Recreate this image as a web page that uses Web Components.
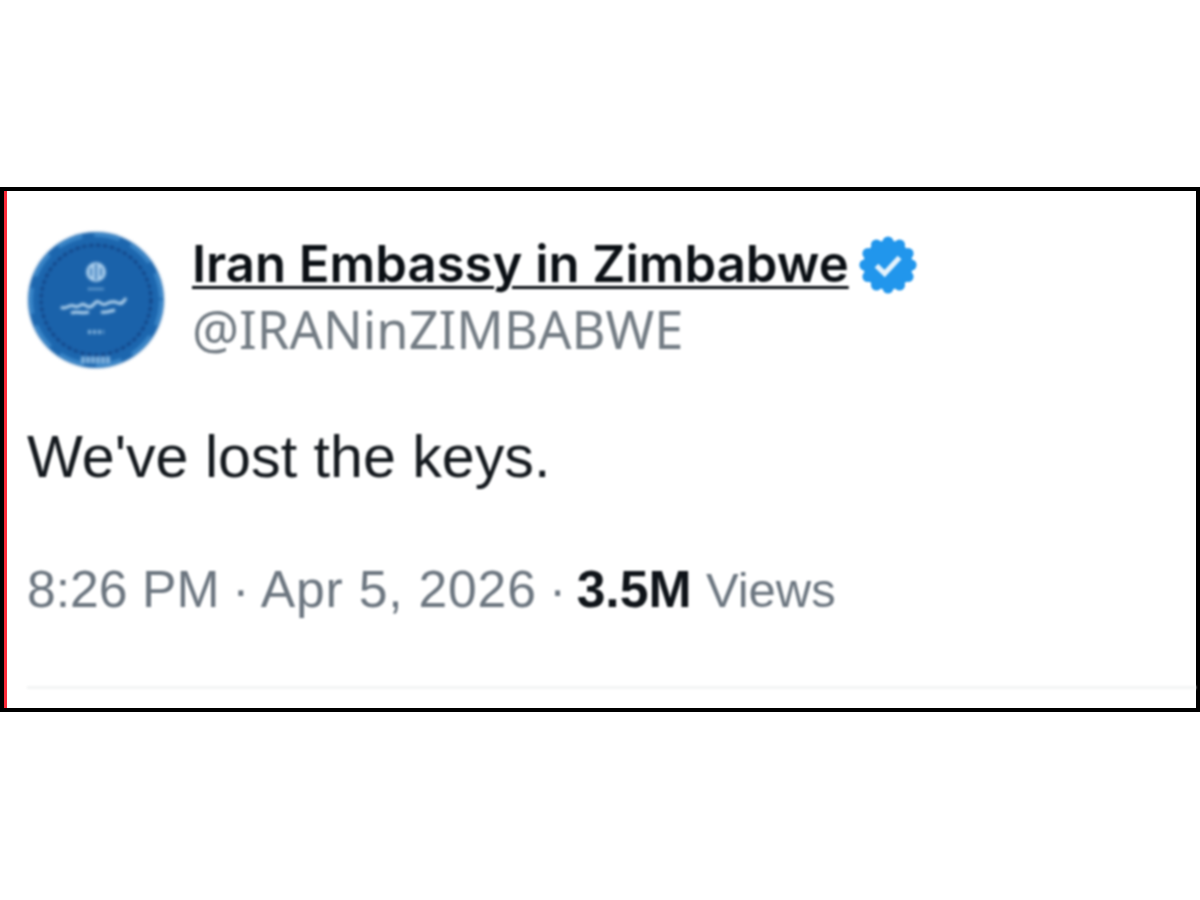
<!DOCTYPE html>
<html>
<head>
<meta charset="utf-8">
<style>
  html, body { margin: 0; background: #fff; }
  body { padding-top: 187px; height: 713px; overflow: hidden; }
</style>
</head>
<body>
<tweet-shot>
  <tweet-head name="Iran Embassy in Zimbabwe" handle="@IRANinZIMBABWE"></tweet-head>
  <p>We've lost the keys.</p>
  <tweet-meta time="8:26 PM" date="Apr 5, 2026" views="3.5M"></tweet-meta>
</tweet-shot>

<script>
class TweetShot extends HTMLElement {
  constructor() {
    super();
    this.attachShadow({ mode: 'open' });
    this.shadowRoot.innerHTML = `
      <style>
        :host {
          display: block;
          box-sizing: border-box;
          height: 525px;
          border: 4px solid #000;
          background: #fff;
        }
        .inner {
          box-sizing: border-box;
          height: 100%;
          border-left: 3px solid #fb2a38;
        }
        .content {
          box-sizing: border-box;
          height: 100%;
          padding: 40px 0 0 20px;
          display: flex;
          flex-direction: column;
          filter: blur(0.8px);
        }
        ::slotted(p) {
          margin: 56px 0 0;
          font: 400 59.2px/64px "Liberation Sans", Arial, sans-serif;
          color: #14191e;
        }
        hr {
          margin: auto 0 19px;
          border: 0;
          height: 3px;
          width: 100%;
          background: #f3f4f4;
        }
      </style>
      <div class="inner">
        <div class="content">
          <slot></slot>
          <hr>
        </div>
      </div>
    `;
  }
}

class TweetHead extends HTMLElement {
  constructor() {
    super();
    this.attachShadow({ mode: 'open' });
    this.shadowRoot.innerHTML = `
      <style>
        :host { display: flex; align-items: flex-start; gap: 27px; }
        svg { display: block; flex: none; }
        .avatar { filter: blur(1.2px); }
        .who { padding-top: 2px; }
        .row { display: flex; align-items: center; gap: 6px; height: 62px; }
        .badge { margin-top: 2px; }
        .name {
          font: 600 50.8px/62px Inter, "Liberation Sans", sans-serif;
          color: #0a0f14;
          text-decoration: underline;
          text-decoration-thickness: 3px;
          text-underline-offset: 4px;
          white-space: nowrap;
        }
        .handle {
          margin-top: 3px;
          font: 400 52.4px/62px "Noto Sans", "Liberation Sans", sans-serif;
          color: #737c84;
          white-space: nowrap;
        }
      </style>
      <svg class="avatar" width="138" height="138" viewBox="0 0 138 138">
        <circle cx="69" cy="69" r="68" fill="#1c66ae"/>
        <circle cx="69" cy="69" r="65" fill="none" stroke="#3a86c8" stroke-width="4" stroke-dasharray="26 12"/>
        <circle cx="69" cy="69" r="55" fill="#1a62aa" stroke="#123f80" stroke-width="2.5" stroke-dasharray="4 3"/>
        <circle cx="69" cy="41" r="10" fill="#a8cdec"/>
        <path d="M69 33v16M64 37v8M74 37v8" stroke="#1a62aa" stroke-width="1.5"/>
        <path d="M61 58h16" stroke="#7fb0dc" stroke-width="2.5" stroke-dasharray="2 1"/>
        <path d="M34 76c5 4 8-4 13-1s7-4 11-1 6 3 10-2 6 4 11 1 8-3 12-1 6-2 8-5M44 82c6-2 12 1 18-1m12 0c5 1 9-1 14-2" fill="none" stroke="#b4d4ee" stroke-width="3"/>
        <path d="M61 101h16" stroke="#8ab8e0" stroke-width="4" stroke-dasharray="3 2"/>
        <path d="M54 129h30" stroke="#7fb0dc" stroke-width="7" stroke-dasharray="4 1"/>
      </svg>
      <div class="who">
        <div class="row">
          <span class="name"></span>
          <svg class="badge" width="66" height="66" viewBox="0 0 24 24">
            <g fill="#2196ec">
              <circle cx="12" cy="12" r="9"/>
              <circle cx="12" cy="3.6" r="2"/><circle cx="16.2" cy="4.7" r="2"/><circle cx="19.3" cy="7.8" r="2"/>
              <circle cx="20.4" cy="12" r="2"/><circle cx="19.3" cy="16.2" r="2"/><circle cx="16.2" cy="19.3" r="2"/>
              <circle cx="12" cy="20.4" r="2"/><circle cx="7.8" cy="19.3" r="2"/><circle cx="4.7" cy="16.2" r="2"/>
              <circle cx="3.6" cy="12" r="2"/><circle cx="4.7" cy="7.8" r="2"/><circle cx="7.8" cy="4.7" r="2"/>
            </g>
            <path d="M7.8 12.2l3 2.9 5.4-5.8" fill="none" stroke="#e4f2fc" stroke-width="1.9"/>
          </svg>
        </div>
        <div class="handle"></div>
      </div>
    `;
    this.shadowRoot.querySelector('.name').textContent = this.getAttribute('name');
    this.shadowRoot.querySelector('.handle').textContent = this.getAttribute('handle');
  }
}

class TweetMeta extends HTMLElement {
  constructor() {
    super();
    this.attachShadow({ mode: 'open' });
    this.shadowRoot.innerHTML = `<style>
        :host {
          display: block;
          margin-top: 70px;
          font: 400 51.7px/60px "Liberation Sans", Arial, sans-serif;
          color: #6c7680;
          white-space: pre;
        }
        b { color: #0f1419; }
        .sep { letter-spacing: -1.6px; }
        .sep.end { letter-spacing: -2px; }
        .date { letter-spacing: 0.8px; }
        .views { font-size: 49px; }
      </style><span class="time"></span><span class="sep"> · </span><span class="date"></span><span class="sep end"> · </span><b></b> <span class="views">Views</span>`;
    this.shadowRoot.querySelector('.time').textContent = this.getAttribute('time');
    this.shadowRoot.querySelector('.date').textContent = this.getAttribute('date');
    this.shadowRoot.querySelector('b').textContent = this.getAttribute('views');
  }
}

customElements.define('tweet-head', TweetHead);
customElements.define('tweet-meta', TweetMeta);
customElements.define('tweet-shot', TweetShot);
</script>
</body>
</html>
